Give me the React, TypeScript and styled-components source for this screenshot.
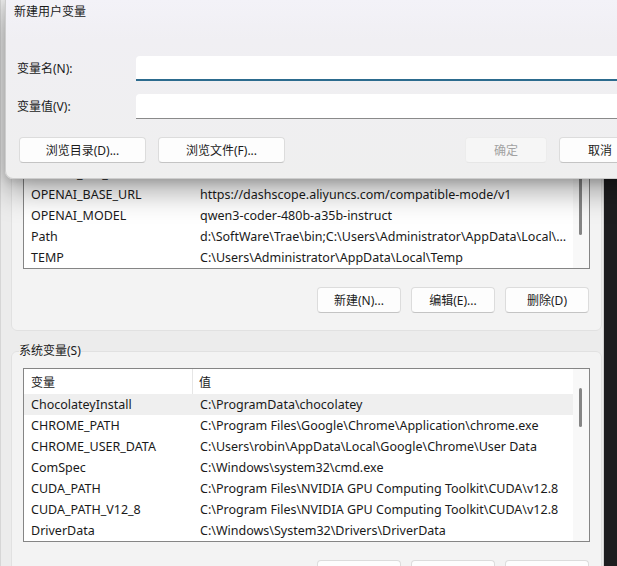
import React from 'react'
import styled, { createGlobalStyle } from 'styled-components'

const GlobalStyle = createGlobalStyle`
  html, body {
    margin: 0;
    padding: 0;
    width: 617px;
    height: 566px;
    overflow: hidden;
    background: #ececec;
  }
  body {
    font-family: "Noto Sans", "Noto Sans CJK SC", sans-serif;
    font-size: 12px;
    color: #1a1a1a;
  }
  * { box-sizing: border-box; }
`

const Screen = styled.div`
  position: relative;
  width: 617px;
  height: 566px;
  display: flex;
  overflow: hidden;
`

const EnvWindow = styled.div`
  width: 604px;
  border-right: 1px solid #d2d2d2;
  border-left: 1px solid #d6d6d6;
  background: #ececec;
  display: flex;
  flex-direction: column;
  padding: 70px 1px 0 10px;
`

const Desktop = styled.div`
  flex: 1;
  background: #1d1d1f;
`

const Group = styled.fieldset<{ $gap?: number }>`
  margin: ${p => p.$gap ?? 0}px 0 0 0;
  border: 1px solid #e1e1e1;
  border-radius: 6px;
  background: #f3f3f3;
  padding: 9px 10px 17px 11px;
  min-width: 0;
`

const Legend = styled.legend`
  margin-left: -4px;
  padding: 0;
  line-height: 16px;
  color: #1a1a1a;
`

const ListBox = styled.div`
  width: 567px;
  height: 174px;
  border: 1px solid #858585;
  background: #fff;
  display: flex;
  overflow: hidden;
`

const Rows = styled.div`
  flex: 1;
  min-width: 0;
  display: flex;
  flex-direction: column;
`

const HeaderRow = styled.div`
  height: 25px;
  display: flex;
  align-items: center;
  flex-shrink: 0;
`

const HeadCell = styled.div<{ $first?: boolean }>`
  height: 100%;
  display: flex;
  align-items: center;
  ${p => (p.$first ? 'width: 169px; padding-left: 7px; border-right: 1px solid #e6e6e6;' : 'flex: 1; padding-left: 6px;')}
`

const Row = styled.div<{ $selected?: boolean }>`
  height: 21px;
  display: flex;
  align-items: center;
  flex-shrink: 0;
  font-size: 12.5px;
  background: ${p => (p.$selected ? '#efefef' : 'transparent')};
  white-space: nowrap;
`

const NameCell = styled.div`
  width: 169px;
  flex-shrink: 0;
  padding-left: 7px;
  overflow: hidden;
`

const ValueCell = styled.div`
  flex: 1;
  min-width: 0;
  padding: 0 6px 0 7px;
  overflow: hidden;
  text-overflow: ellipsis;
`

const Track = styled.div`
  width: 16px;
  background: #f8f8f8;
  flex-shrink: 0;
  padding-left: 6px;
`

const Thumb = styled.div<{ $top: number; $len: number }>`
  width: 3px;
  margin-top: ${p => p.$top}px;
  height: ${p => p.$len}px;
  border-radius: 2px;
  background: #858585;
`

const ButtonRow = styled.div`
  display: flex;
  justify-content: flex-end;
  gap: 10px;
  margin-top: 18px;
  padding-right: 2px;
`

const Button = styled.button<{ $w: number; $disabled?: boolean }>`
  width: ${p => p.$w}px;
  height: 26px;
  padding: 0;
  font: inherit;
  border-radius: 4px;
  border: 1px solid ${p => (p.$disabled ? '#ececec' : '#dcdcdc')};
  border-bottom-color: ${p => (p.$disabled ? '#e6e6e6' : '#c4c4c4')};
  background: ${p => (p.$disabled ? '#f6f6f6' : '#fdfdfd')};
  color: ${p => (p.$disabled ? '#a2a2a2' : '#1b1b1b')};
  flex-shrink: 0;
`

/* ---------- dialog on top ---------- */

const Dialog = styled.div`
  position: absolute;
  top: 0;
  left: 5px;
  width: 648px;
  height: 179px;
  border: 1px solid #cdcdcd;
  border-top: none;
  border-radius: 0 0 8px 8px;
  background: linear-gradient(180deg, #f3f2f8 0, #f0eff3 40px, #efefef 100%);
  box-shadow: 0 12px 30px rgba(0, 0, 0, 0.36), 0 3px 8px rgba(0, 0, 0, 0.14);
  display: flex;
  flex-direction: column;
`

const TitleBar = styled.div`
  height: 30px;
  padding: 4px 0 0 8px;
  line-height: 16px;
`

const Form = styled.div`
  display: grid;
  grid-template-columns: 119px 1fr;
  row-gap: 13px;
  padding: 26px 0 0 11px;
  align-items: center;
`

const Label = styled.label`
  line-height: 16px;
`

const Field = styled.div<{ $focused?: boolean }>`
  height: 25px;
  background: #fff;
  border-radius: 4px 0 0 0;
  border-bottom: ${p => (p.$focused ? '2px solid #2c6b8e' : '1px solid #8a8a8a')};
`

const DialogButtons = styled.div`
  display: flex;
  gap: 12px;
  margin-top: 18px;
  padding: 0 11px 0 13px;
`

const Spacer = styled.div`
  flex: 1;
`

type Item = { name: string; value: string; selected?: boolean }

const userVars: Item[] = [
  { name: 'OneDrive', value: 'C:\\Users\\Administrator\\OneDrive' },
  { name: 'OneDriveConsumer', value: 'C:\\Users\\Administrator\\OneDrive' },
  { name: 'OPENAI_API_KEY', value: 'sk-********************************' },
  { name: 'OPENAI_BASE_URL', value: 'https://dashscope.aliyuncs.com/compatible-mode/v1' },
  { name: 'OPENAI_MODEL', value: 'qwen3-coder-480b-a35b-instruct' },
  { name: 'Path', value: 'd:\\SoftWare\\Trae\\bin;C:\\Users\\Administrator\\AppData\\Local\\Microsoft\\WindowsApps' },
  { name: 'TEMP', value: 'C:\\Users\\Administrator\\AppData\\Local\\Temp' },
]

const systemVars: Item[] = [
  { name: 'ChocolateyInstall', value: 'C:\\ProgramData\\chocolatey', selected: true },
  { name: 'CHROME_PATH', value: 'C:\\Program Files\\Google\\Chrome\\Application\\chrome.exe' },
  { name: 'CHROME_USER_DATA', value: 'C:\\Users\\robin\\AppData\\Local\\Google\\Chrome\\User Data' },
  { name: 'ComSpec', value: 'C:\\Windows\\system32\\cmd.exe' },
  { name: 'CUDA_PATH', value: 'C:\\Program Files\\NVIDIA GPU Computing Toolkit\\CUDA\\v12.8' },
  { name: 'CUDA_PATH_V12_8', value: 'C:\\Program Files\\NVIDIA GPU Computing Toolkit\\CUDA\\v12.8' },
  { name: 'DriverData', value: 'C:\\Windows\\System32\\Drivers\\DriverData' },
]

const VarList = ({ items, thumbTop, thumbLen }: { items: Item[]; thumbTop: number; thumbLen: number }) => (
  <ListBox>
    <Rows>
      <HeaderRow>
        <HeadCell $first>变量</HeadCell>
        <HeadCell>值</HeadCell>
      </HeaderRow>
      {items.map(it => (
        <Row key={it.name} $selected={it.selected}>
          <NameCell>{it.name}</NameCell>
          <ValueCell>{it.value}</ValueCell>
        </Row>
      ))}
    </Rows>
    <Track>
      <Thumb $top={thumbTop} $len={thumbLen} />
    </Track>
  </ListBox>
)

const ListButtons = () => (
  <ButtonRow>
    <Button $w={84}>新建(N)...</Button>
    <Button $w={84}>编辑(E)...</Button>
    <Button $w={84}>删除(D)</Button>
  </ButtonRow>
)

export default function App() {
  return (
    <>
      <GlobalStyle />
      <Screen>
        <EnvWindow>
          <Group>
            <Legend>Administrator 的用户变量(U)</Legend>
            <VarList items={userVars} thumbTop={40} thumbLen={99} />
            <ListButtons />
          </Group>
          <Group $gap={12}>
            <Legend>系统变量(S)</Legend>
            <VarList items={systemVars} thumbTop={19} thumbLen={39} />
            <ListButtons />
          </Group>
        </EnvWindow>
        <Desktop />

        <Dialog>
          <TitleBar>新建用户变量</TitleBar>
          <Form>
            <Label>变量名(N):</Label>
            <Field $focused />
            <Label>变量值(V):</Label>
            <Field />
          </Form>
          <DialogButtons>
            <Button $w={127}>浏览目录(D)...</Button>
            <Button $w={127}>浏览文件(F)...</Button>
            <Spacer />
            <Button $w={82} $disabled>确定</Button>
            <Button $w={82}>取消</Button>
          </DialogButtons>
        </Dialog>
      </Screen>
    </>
  )
}
